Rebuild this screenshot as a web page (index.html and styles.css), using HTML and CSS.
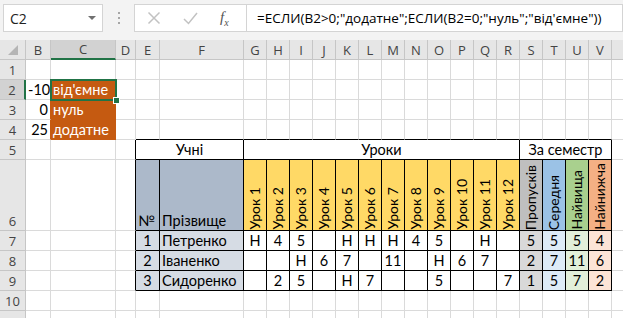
FILE: index.html
```html
<!DOCTYPE html>
<html lang="uk">
<head>
    <meta charset="UTF-8">
    <meta name="viewport" content="width=device-width, initial-scale=1.0">
    <title>ЕСЛИ — журнал</title>
    <link rel="stylesheet" href="styles.css">
</head>
<body>
    <div class="formula-bar">
        <div class="name-box"><span>C2</span><span class="caret"></span></div>
        <div class="grip"><span></span><span></span><span></span></div>
        <div class="fx-box">
            <svg class="icon" width="14" height="14" viewBox="0 0 14 14"><path d="M1.5 1.5 L12.5 12.5 M12.5 1.5 L1.5 12.5" stroke="#c2c2c2" stroke-width="1.5" fill="none"/></svg>
            <svg class="icon" width="15" height="13" viewBox="0 0 15 13"><path d="M1 7 L5.5 11.5 L14 1" stroke="#c2c2c2" stroke-width="1.5" fill="none"/></svg>
            <span class="fx"><i>f</i><sub>x</sub></span>
        </div>
        <div class="formula">=ЕСЛИ(B2&gt;0;"додатне";ЕСЛИ(B2=0;"нуль";"від'ємне"))</div>
    </div>

    <table class="sheet">
        <colgroup>
            <col class="w-head">
            <col class="w-b">
            <col class="w-c">
            <col class="w-d">
            <col class="w-e">
            <col class="w-f">
            <col class="w-les"><col class="w-les"><col class="w-les"><col class="w-les">
            <col class="w-les"><col class="w-les"><col class="w-les"><col class="w-les">
            <col class="w-les"><col class="w-les"><col class="w-les"><col class="w-les">
            <col class="w-les"><col class="w-les"><col class="w-les"><col class="w-les">
            <col class="w-rest">
        </colgroup>
        <tr class="col-heads">
            <th class="corner"><span class="tri"></span></th>
            <th>B</th><th class="on">C</th><th>D</th><th>E</th><th>F</th>
            <th>G</th><th>H</th><th>I</th><th>J</th><th>K</th><th>L</th><th>M</th><th>N</th>
            <th>O</th><th>P</th><th>Q</th><th>R</th><th>S</th><th>T</th><th>U</th><th>V</th>
            <th></th>
        </tr>
        <tr>
            <th class="rh">1</th>
            <td></td><td></td><td></td><td></td><td></td>
            <td></td><td></td><td></td><td></td><td></td><td></td><td></td><td></td>
            <td></td><td></td><td></td><td></td><td></td><td></td><td></td><td></td>
            <td></td>
        </tr>
        <tr>
            <th class="rh on">2</th>
            <td class="num">-10</td>
            <td class="fill-or sel">від'ємне<div class="sel-frame"><span class="handle"></span></div></td>
            <td></td><td></td><td></td>
            <td></td><td></td><td></td><td></td><td></td><td></td><td></td><td></td>
            <td></td><td></td><td></td><td></td><td></td><td></td><td></td><td></td>
            <td></td>
        </tr>
        <tr>
            <th class="rh">3</th>
            <td class="num edge-or">0</td>
            <td class="fill-or">нуль</td>
            <td></td><td></td><td></td>
            <td></td><td></td><td></td><td></td><td></td><td></td><td></td><td></td>
            <td></td><td></td><td></td><td></td><td></td><td></td><td></td><td></td>
            <td></td>
        </tr>
        <tr>
            <th class="rh">4</th>
            <td class="num edge-or">25</td>
            <td class="fill-or">додатне</td>
            <td></td><td class="ab"></td><td class="ab"></td>
            <td class="ab"></td><td class="ab"></td><td class="ab"></td><td class="ab"></td>
            <td class="ab"></td><td class="ab"></td><td class="ab"></td><td class="ab"></td>
            <td class="ab"></td><td class="ab"></td><td class="ab"></td><td class="ab"></td>
            <td class="ab"></td><td class="ab"></td><td class="ab"></td><td class="ab"></td>
            <td></td>
        </tr>
        <tr>
            <th class="rh">5</th>
            <td></td><td></td><td class="lb"></td>
            <td colspan="2" class="t ctr">Учні</td>
            <td colspan="12" class="t ctr">Уроки</td>
            <td colspan="4" class="t ctr">За семестр</td>
            <td></td>
        </tr>
        <tr class="tall">
            <th class="rh">6</th>
            <td></td><td></td><td class="lb"></td>
            <td class="t hd-blue">№</td>
            <td class="t hd-blue name">Прізвище</td>
            <td class="t hd-gold vcell"><span class="vert">Урок 1</span></td>
            <td class="t hd-gold vcell"><span class="vert">Урок 2</span></td>
            <td class="t hd-gold vcell"><span class="vert">Урок 3</span></td>
            <td class="t hd-gold vcell"><span class="vert">Урок 4</span></td>
            <td class="t hd-gold vcell"><span class="vert">Урок 5</span></td>
            <td class="t hd-gold vcell"><span class="vert">Урок 6</span></td>
            <td class="t hd-gold vcell"><span class="vert">Урок 7</span></td>
            <td class="t hd-gold vcell"><span class="vert">Урок 8</span></td>
            <td class="t hd-gold vcell"><span class="vert">Урок 9</span></td>
            <td class="t hd-gold vcell"><span class="vert">Урок 10</span></td>
            <td class="t hd-gold vcell"><span class="vert">Урок 11</span></td>
            <td class="t hd-gold vcell"><span class="vert">Урок 12</span></td>
            <td class="t hd-gray vcell"><span class="vert">Пропусків</span></td>
            <td class="t hd-sky vcell"><span class="vert">Середня</span></td>
            <td class="t hd-green vcell"><span class="vert">Найвища</span></td>
            <td class="t hd-peach vcell"><span class="vert">Найнижча</span></td>
            <td></td>
        </tr>
        <tr>
            <th class="rh">7</th>
            <td></td><td></td><td class="lb"></td>
            <td class="t ctr bd-blue">1</td>
            <td class="t bd-blue name">Петренко</td>
            <td class="t ctr">Н</td><td class="t ctr">4</td><td class="t ctr">5</td><td class="t ctr"></td>
            <td class="t ctr">Н</td><td class="t ctr">Н</td><td class="t ctr">Н</td><td class="t ctr">4</td>
            <td class="t ctr">5</td><td class="t ctr"></td><td class="t ctr">Н</td><td class="t ctr"></td>
            <td class="t ctr bd-gray">5</td><td class="t ctr bd-sky">5</td><td class="t ctr bd-green">5</td><td class="t ctr bd-peach">4</td>
            <td></td>
        </tr>
        <tr>
            <th class="rh">8</th>
            <td></td><td></td><td class="lb"></td>
            <td class="t ctr bd-blue">2</td>
            <td class="t bd-blue name">Іваненко</td>
            <td class="t ctr"></td><td class="t ctr"></td><td class="t ctr">Н</td><td class="t ctr">6</td>
            <td class="t ctr">7</td><td class="t ctr"></td><td class="t ctr">11</td><td class="t ctr"></td>
            <td class="t ctr">Н</td><td class="t ctr">6</td><td class="t ctr">7</td><td class="t ctr"></td>
            <td class="t ctr bd-gray">2</td><td class="t ctr bd-sky">7</td><td class="t ctr bd-green">11</td><td class="t ctr bd-peach">6</td>
            <td></td>
        </tr>
        <tr>
            <th class="rh">9</th>
            <td></td><td></td><td class="lb"></td>
            <td class="t ctr bd-blue">3</td>
            <td class="t bd-blue name">Сидоренко</td>
            <td class="t ctr"></td><td class="t ctr">2</td><td class="t ctr">5</td><td class="t ctr"></td>
            <td class="t ctr">Н</td><td class="t ctr">7</td><td class="t ctr"></td><td class="t ctr"></td>
            <td class="t ctr">5</td><td class="t ctr"></td><td class="t ctr"></td><td class="t ctr">7</td>
            <td class="t ctr bd-gray">1</td><td class="t ctr bd-sky">5</td><td class="t ctr bd-green">7</td><td class="t ctr bd-peach">2</td>
            <td></td>
        </tr>
        <tr>
            <th class="rh">10</th>
            <td></td><td></td><td></td><td></td><td></td>
            <td></td><td></td><td></td><td></td><td></td><td></td><td></td><td></td>
            <td></td><td></td><td></td><td></td><td></td><td></td><td></td><td></td>
            <td></td>
        </tr>
        <tr>
            <th class="rh"></th>
            <td></td><td></td><td></td><td></td><td></td>
            <td></td><td></td><td></td><td></td><td></td><td></td><td></td><td></td>
            <td></td><td></td><td></td><td></td><td></td><td></td><td></td><td></td>
            <td></td>
        </tr>
    </table>
</body>
</html>
```

FILE: styles.css
```css
body {
    margin: 0;
    width: 623px;
    height: 318px;
    overflow: hidden;
    background-color: #fff;
    font-family: "Lato", "Liberation Sans", sans-serif;
}

/* formula bar */
.formula-bar {
    display: flex;
    align-items: flex-start;
    height: 40px;
    padding: 4px 0 0 3px;
    box-sizing: border-box;
    background-color: #f3f3f3;
}
.name-box {
    width: 100px;
    height: 28px;
    box-sizing: border-box;
    display: flex;
    align-items: center;
    justify-content: space-between;
    padding: 0 6px 0 6px;
    background-color: #fff;
    border: 1px solid #d4d4d4;
    font-family: "Open Sans", sans-serif;
    font-size: 14px;
    color: #222;
}
.caret {
    width: 0;
    height: 0;
    border-left: 4px solid transparent;
    border-right: 4px solid transparent;
    border-top: 4px solid #707070;
}
.grip {
    width: 31px;
    height: 28px;
    display: flex;
    flex-direction: column;
    align-items: center;
    justify-content: center;
    gap: 3px;
}
.grip span {
    width: 2px;
    height: 2px;
    background-color: #a6a6a6;
}
.fx-box {
    width: 113px;
    height: 28px;
    box-sizing: border-box;
    display: flex;
    align-items: center;
    padding-left: 12px;
    gap: 22px;
    background-color: #fff;
    border: 1px solid #d4d4d4;
}
.fx {
    font-family: "Liberation Serif", serif;
    font-size: 15px;
    color: #555;
}
.fx sub {
    font-size: 10px;
    font-style: italic;
}
.formula {
    flex: 1;
    height: 28px;
    box-sizing: border-box;
    padding-left: 10px;
    line-height: 26px;
    background-color: #fff;
    border: 1px solid #d4d4d4;
    border-left: none;
    font-family: "Open Sans", sans-serif;
    font-size: 13.5px;
    color: #000;
    white-space: nowrap;
    overflow: hidden;
}

/* sheet */
.sheet {
    border-collapse: separate;
    border-spacing: 0;
    table-layout: fixed;
    width: 652px;
    font-size: 14.5px;
    color: #000;
}
.w-head { width: 26px; }
.w-b { width: 25px; }
.w-c { width: 65px; }
.w-d { width: 20px; }
.w-e { width: 24px; }
.w-f { width: 84px; }
.w-les { width: 23px; }
.w-rest { width: 40px; }

.sheet tr { height: 20px; }
.sheet tr.tall { height: 71px; }

.sheet td, .sheet th {
    padding: 0 2px;
    border-right: 1px solid #dadada;
    border-bottom: 1px solid #dadada;
    vertical-align: bottom;
    line-height: 18px;
    white-space: nowrap;
}
.sheet th {
    background-color: #e6e6e6;
    border-right-color: #c6c6c6;
    border-bottom-color: #c6c6c6;
    font-family: "Open Sans", sans-serif;
    font-size: 13px;
    font-weight: normal;
    color: #444;
    text-align: center;
}
.col-heads th {
    vertical-align: middle;
}
.sheet th.on {
    background-color: #d2d2d2;
}
.col-heads th.on {
    border-bottom: 2px solid #217346;
}
.rh.on {
    border-right: 2px solid #217346;
}
.corner {
    text-align: right;
}
.tri {
    display: inline-block;
    width: 0;
    height: 0;
    margin-top: 5px;
    border-left: 10px solid transparent;
    border-bottom: 10px solid #b5b5b5;
}

.num { text-align: right; }
.ctr { text-align: center; }
.name { padding-left: 3px; }

.fill-or {
    background-color: #c55a11;
    color: #fff;
    border-right-color: #c55a11 !important;
    border-bottom-color: #c55a11 !important;
}
.edge-or { border-right-color: #c55a11 !important; }

.sel { position: relative; }
.sel-frame {
    position: absolute;
    left: -1px;
    top: -1px;
    right: -2px;
    bottom: -2px;
    border: 2px solid #217346;
}
.handle {
    position: absolute;
    right: -5px;
    bottom: -5px;
    width: 5px;
    height: 5px;
    background-color: #217346;
    border: 1px solid #fff;
}

/* bordered table */
.sheet td.t {
    border-right-color: #000;
    border-bottom-color: #000;
}
.sheet td.ab { border-bottom-color: #000; }
.sheet td.lb { border-right-color: #000; }

.vcell {
    padding: 0 0 3px;
    text-align: center;
    line-height: 0;
}
.vert {
    display: inline-block;
    vertical-align: bottom;
    writing-mode: vertical-rl;
    transform: rotate(180deg);
    font-size: 14px;
    line-height: 18px;
}

.hd-blue { background-color: #acb9ca; }
.bd-blue { background-color: #d6dce4; }
.hd-gold { background-color: #ffd966; }
.hd-gray { background-color: #bfbfbf; }
.bd-gray { background-color: #d9d9d9; }
.hd-sky { background-color: #9bc2e6; }
.bd-sky { background-color: #ddebf7; }
.hd-green { background-color: #a9d08e; }
.bd-green { background-color: #e2efda; }
.hd-peach { background-color: #f4b084; }
.bd-peach { background-color: #fce4d6; }
```
